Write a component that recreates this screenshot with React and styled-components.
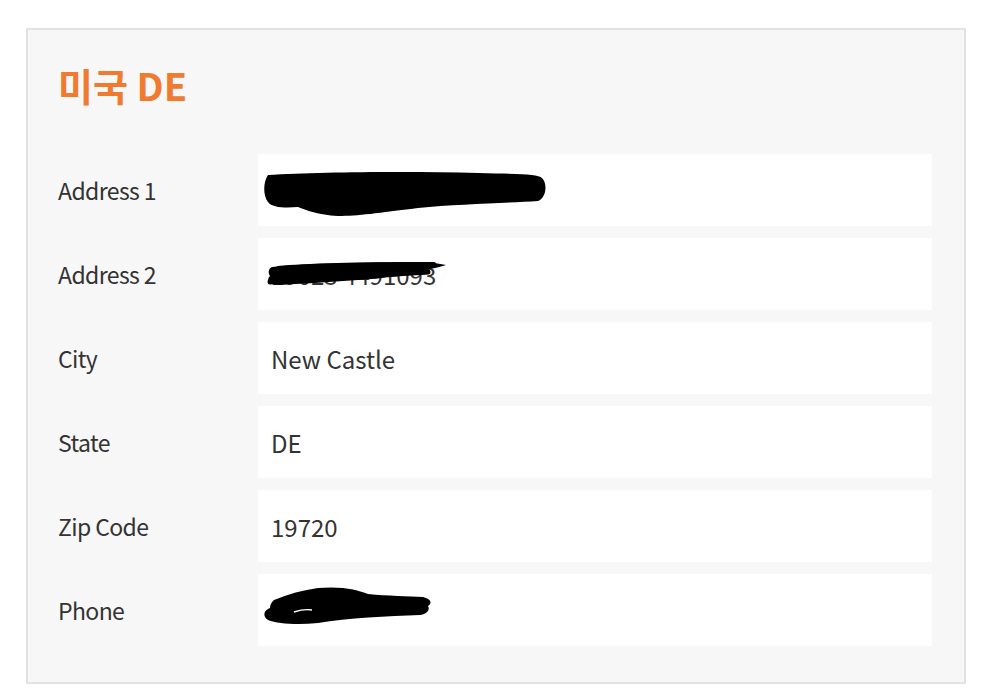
import React from "react";
import styled, { createGlobalStyle } from "styled-components";

const Global = createGlobalStyle`
  html, body { margin: 0; padding: 0; background: #ffffff; }
  body { font-family: "Noto Sans CJK KR", "Noto Sans", sans-serif; }
`;

const Page = styled.div`
  padding: 28px 28px 14px 26px;
`;

const Card = styled.section`
  width: 940px;
  box-sizing: border-box;
  background: #f7f7f7;
  border: 2px solid #e2e2e2;
  padding: 26px 32px 36px 30px;
`;

const Title = styled.h2`
  margin: 0 0 40px 0;
  font-size: 38px;
  line-height: 58px;
  font-weight: 700;
  color: #f07b30;
  letter-spacing: 0;
`;

const Rows = styled.div`
  display: flex;
  flex-direction: column;
  gap: 12px;
`;

const Row = styled.div`
  display: grid;
  grid-template-columns: 200px 1fr;
  height: 72px;
`;

const Label = styled.div`
  display: flex;
  align-items: center;
  font-size: 23px;
  color: #333333;
  letter-spacing: -0.6px;
`;

const Value = styled.div`
  position: relative;
  display: flex;
  align-items: center;
  background: #ffffff;
  padding-left: 13px;
  font-size: 24px;
  color: #333333;
`;

const Scribble = styled.svg`
  position: absolute;
  left: 0;
  top: 0;
  pointer-events: none;
`;

const Redact1 = () => (
  <Scribble width="300" height="72" viewBox="0 0 300 72">
    <path
      d="M10 21 C60 18 150 17 220 19 C260 20 280 20 284 24 C290 30 288 44 280 47 C250 49 200 50 160 54 C120 59 100 62 80 62 C60 61 48 56 40 53 C28 54 14 54 10 48 C5 42 5 28 10 21 Z"
      fill="#000"
    />
  </Scribble>
);

const Redact2 = () => (
  <Scribble width="300" height="72" viewBox="0 0 300 72">
    <path
      d="M14 29 C40 26 110 24 160 24 C175 24 180 26 188 27 C182 29 172 31 168 32 C160 36 130 40 100 42 C70 44 40 46 22 47 C10 47 8 42 12 38 C10 35 10 31 14 29 Z"
      fill="#000"
    />
    <path d="M20 30 C60 26 120 26 176 26" stroke="#000" strokeWidth="4" fill="none" strokeLinecap="round" />
    <path d="M12 44 C50 40 110 38 170 34" stroke="#000" strokeWidth="5" fill="none" strokeLinecap="round" />
  </Scribble>
);

const Redact3 = () => (
  <Scribble width="300" height="72" viewBox="0 0 300 72">
    <path
      d="M16 26 C30 20 45 16 60 14 C85 12 100 16 110 20 C130 22 150 22 165 23 C174 25 174 30 170 32 C172 35 170 40 162 41 C130 42 90 44 60 49 C40 51 20 50 10 46 C4 42 6 36 12 34 C12 30 14 28 16 26 Z"
      fill="#000"
    />
    <path d="M36 38 C42 36 48 35 54 36" stroke="#fff" strokeWidth="1.4" fill="none" />
  </Scribble>
);

const data = [
  { label: "Address 1", value: "", redact: <Redact1 /> },
  { label: "Address 2", value: "19023 4491093", redact: <Redact2 /> },
  { label: "City", value: "New Castle" },
  { label: "State", value: "DE" },
  { label: "Zip Code", value: "19720" },
  { label: "Phone", value: "", redact: <Redact3 /> },
];

export default function App() {
  return (
    <>
      <Global />
      <Page>
        <Card>
          <Title>미국 DE</Title>
          <Rows>
            {data.map((r) => (
              <Row key={r.label}>
                <Label>{r.label}</Label>
                <Value>
                  {r.value}
                  {r.redact}
                </Value>
              </Row>
            ))}
          </Rows>
        </Card>
      </Page>
    </>
  );
}
